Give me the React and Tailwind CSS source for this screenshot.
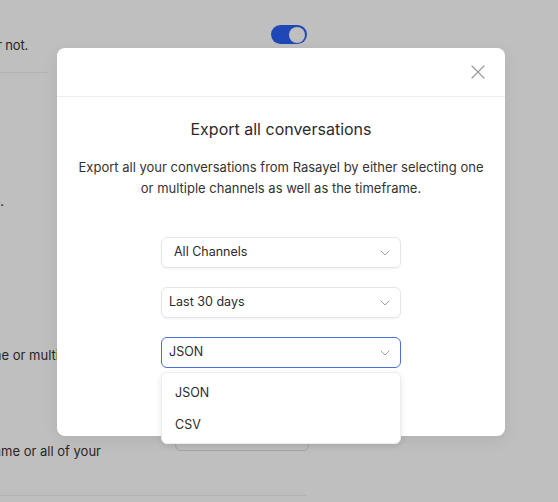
import React from "react";

function Chevron() {
  return (
    <svg width="10" height="6" viewBox="0 0 10 6" fill="none" className="text-gray-400">
      <path d="M1 1l4 4 4-4" stroke="currentColor" strokeWidth="1" strokeLinecap="round" strokeLinejoin="round" />
    </svg>
  );
}

function Select({ label, active, pad }) {
  return (
    <div
      className={
        "w-[240px] h-[31px] flex items-center justify-between bg-white rounded-md pr-[10px] text-[12.5px] text-[#2b2b2b] " +
        pad +
        (active ? " border border-[#4a6ee0]" : " border border-[#e6e6e6] shadow-[0_1px_2px_rgba(0,0,0,0.05)]")
      }
    >
      <span>{label}</span>
      <Chevron />
    </div>
  );
}

export default function App() {
  return (
    <div className="relative w-[558px] h-[502px] overflow-hidden bg-white font-['Inter',sans-serif] text-[13px] text-[#333]">
      {/* page behind */}
      <div className="flex flex-col">
        <div className="h-[73px] relative border-b border-[#eee] w-[48px]">
          <div className="absolute left-[-200px] top-[36px] w-[228px] text-right whitespace-nowrap tracking-[-0.2px]">Turn it on or not.</div>
        </div>
        <div className="h-[119px] relative">
          <div className="absolute right-[calc(100%-4px)] top-[119px] whitespace-nowrap">Choose the channels.</div>
        </div>
        <div className="h-[18px]" />
        <div className="h-[136px]" />
        <div className="-ml-[14px] whitespace-nowrap">one or multiple</div>
        <div className="h-[76px]" />
        <div className="relative h-[18px]">
          <div className="absolute right-[calc(100%-101px)] top-0 whitespace-nowrap">timeframe or all of your</div>
        </div>
        <div className="h-[35px]" />
        <div className="border-b border-[#eee] w-[306px]" />
      </div>
      <div className="absolute left-[271px] top-[25px] w-[36px] h-[19px] rounded-full bg-[#2a5ff2] flex items-center justify-end pr-[2px]">
        <div className="w-[16px] h-[16px] rounded-full bg-white" />
      </div>
      <div className="absolute left-[175px] top-[420px] w-[134px] h-[31px] rounded-md border border-[#ddd] bg-white" />

      {/* overlay */}
      <div className="absolute inset-0 bg-black/25" />

      {/* modal */}
      <div className="absolute left-[57px] top-[48px] w-[448px] h-[388px] bg-white rounded-lg shadow-[0_4px_16px_rgba(0,0,0,0.08)] flex flex-col">
        <div className="h-[49px] border-b border-[#efefef] flex items-center justify-end pr-[20px]">
          <svg width="14" height="14" viewBox="0 0 14 14" fill="none">
            <path d="M1 1l12 12M13 1L1 13" stroke="#9a9a9a" strokeWidth="1.2" strokeLinecap="round" />
          </svg>
        </div>
        <div className="flex flex-col items-center pt-[21px]">
          <h2 className="text-[16px] leading-[22px] text-[#2b2b2b]">Export all conversations</h2>
          <p className="mt-[17px] text-[13px] leading-[21px] text-center text-[#333]">
            Export all your conversations from Rasayel by either selecting one
            <br />
            or multiple channels as well as the timeframe.
          </p>
          <div className="mt-[38px] flex flex-col gap-[19px]">
            <Select label="All Channels" pad="pl-[12px]" />
            <Select label="Last 30 days" pad="pl-[7px]" />
            <Select label="JSON" pad="pl-[7px]" active />
          </div>
        </div>
      </div>

      {/* dropdown menu */}
      <div className="absolute left-[161px] top-[372px] w-[240px] h-[72px] bg-white rounded-md border border-[#eee] shadow-[0_2px_6px_rgba(0,0,0,0.1)] pt-[4px] text-[12.5px] text-[#2b2b2b]">
        <div className="h-[32px] flex items-center pl-[13px]">JSON</div>
        <div className="h-[32px] flex items-center pl-[13px]">CSV</div>
      </div>
    </div>
  );
}
